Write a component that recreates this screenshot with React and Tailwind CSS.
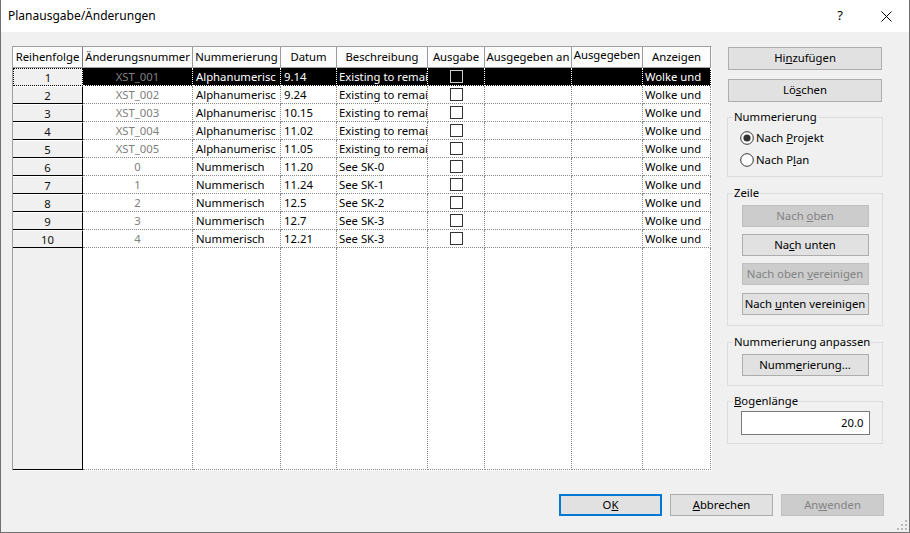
import React from 'react'

const cols = [
  { label: 'Änderungsnummer', w: 'w-[110px]' },
  { label: 'Nummerierung', w: 'w-[88px]' },
  { label: 'Datum', w: 'w-[56px]' },
  { label: 'Beschreibung', w: 'w-[91px]' },
  { label: 'Ausgabe', w: 'w-[57px]' },
  { label: 'Ausgegeben an', w: 'w-[87px]' },
  { label: 'Ausgegeben', w: 'w-[71px]', top: true },
  { label: 'Anzeigen', w: 'w-[68px]' },
]

const rows = [
  ['XST_001', 'Alphanumerisc', '9.14', 'Existing to remai'],
  ['XST_002', 'Alphanumerisc', '9.24', 'Existing to remai'],
  ['XST_003', 'Alphanumerisc', '10.15', 'Existing to remai'],
  ['XST_004', 'Alphanumerisc', '11.02', 'Existing to remai'],
  ['XST_005', 'Alphanumerisc', '11.05', 'Existing to remai'],
  ['0', 'Nummerisch', '11.20', 'See SK-0'],
  ['1', 'Nummerisch', '11.24', 'See SK-1'],
  ['2', 'Nummerisch', '12.5', 'See SK-2'],
  ['3', 'Nummerisch', '12.7', 'See SK-3'],
  ['4', 'Nummerisch', '12.21', 'See SK-3'],
]

function TitleBar() {
  return (
    <div className="h-[32px] shrink-0 bg-white flex items-center">
      <div className="pl-[7px] flex-1 text-[12px]">Planausgabe/Änderungen</div>
      <div className="w-[46px] h-full flex items-center justify-center text-[13px]">?</div>
      <div className="w-[46px] h-full flex items-center justify-center">
        <svg width="11" height="11" viewBox="0 0 11 11">
          <path d="M0.5 0.5 L10.5 10.5 M10.5 0.5 L0.5 10.5" stroke="#000" strokeWidth="1" fill="none" />
        </svg>
      </div>
    </div>
  )
}

function Checkbox({ dark }) {
  return (
    <div
      className={`w-[13px] h-[13px] border ${dark ? 'bg-black border-[#d0d0d0]' : 'bg-white border-[#333333]'}`}
    />
  )
}

function Grid() {
  return (
    <div className="w-[700px] h-[425px] flex flex-col border-l border-t border-[#a0a0a0] border-r-[#fcfcfc] border-b-[#fcfcfc] border-r border-b bg-white">
      {/* header */}
      <div className="flex h-[21px] shrink-0 bg-[#fcfcfc] border-b border-[#a0a0a0]">
        <div className="w-[70px] border-r border-[#7a7a7a] flex items-center justify-center whitespace-nowrap">
          Reihenfolge
        </div>
        {cols.map(c => (
          <div
            key={c.label}
            className={`${c.w} border-r border-[#9a9a9a] flex justify-center whitespace-nowrap overflow-hidden ${c.top ? 'items-start' : 'items-center'}`}
          >
            {c.label}
          </div>
        ))}
      </div>

      {rows.map((r, i) => {
        const sel = i === 0
        const dot = sel ? 'border-white' : 'border-[#8a8a8a]'
        const txt = sel ? 'text-white' : 'text-black'
        return (
          <div key={i} className={`flex h-[18px] shrink-0 leading-[17px] ${sel ? 'bg-black' : 'bg-white'}`}>
            <div
              className={`w-[70px] bg-[#f0f0f0] border-r border-r-black flex items-center justify-center text-[#111] ${sel ? 'border-dotted border border-black' : 'border-t border-t-white border-b border-b-black'}`}
            >
              {i + 1}
            </div>
            <div className={`w-[110px] border-r border-b border-dotted ${dot} text-center text-[#808080]`}>{r[0]}</div>
            <div className={`w-[88px] border-r border-b border-dotted ${dot} ${txt} pl-[3px] whitespace-nowrap overflow-hidden`}>{r[1]}</div>
            <div className={`w-[56px] border-r border-b border-dotted ${dot} ${txt} pl-[3px]`}>{r[2]}</div>
            <div className={`w-[91px] border-r border-b border-dotted ${dot} ${txt} pl-[2px] whitespace-nowrap overflow-hidden`}>{r[3]}</div>
            <div className={`w-[57px] border-r border-b border-dotted ${dot} flex items-center justify-center`}>
              <Checkbox dark={sel} />
            </div>
            <div className={`w-[87px] border-r border-b border-dotted ${dot}`} />
            <div className={`w-[71px] border-r border-b border-dotted ${dot}`} />
            <div className={`w-[68px] border-r border-b border-dotted ${dot} ${txt} pl-[2px] whitespace-nowrap overflow-hidden`}>Wolke und</div>
          </div>
        )
      })}

      {/* empty area */}
      <div className="flex flex-1">
        <div className="w-[70px] bg-[#f0f0f0] border-r border-b border-black" />
        {cols.map(c => (
          <div key={c.label} className={`${c.w} border-r border-b border-dotted border-[#8a8a8a]`} />
        ))}
      </div>
    </div>
  )
}

function Btn({ children, disabled, className = '' }) {
  return (
    <div
      className={`h-[22px] border flex items-center justify-center whitespace-nowrap ${disabled ? 'bg-[#cccccc] border-[#bfbfbf] text-[#838383]' : 'bg-[#e1e1e1] border-[#adadad] text-black'} ${className}`}
    >
      <span>{children}</span>
    </div>
  )
}

function Group({ label, className = '', children }) {
  return (
    <fieldset className={`border border-[#dcdcdc] ${className}`}>
      <legend className="ml-[5px] px-[1px] leading-[16px]">{label}</legend>
      {children}
    </fieldset>
  )
}

function Radio({ checked, children }) {
  return (
    <div className="flex items-center h-[18px] pl-[12px] gap-[2px]">
      <svg width="14" height="14" viewBox="0 0 14 14">
        <circle cx="7" cy="7" r="6.3" fill="#fff" stroke="#333" strokeWidth="1" />
        {checked && <circle cx="7" cy="7" r="3.6" fill="#333" />}
      </svg>
      <span>{children}</span>
    </div>
  )
}

function SidePanel() {
  return (
    <div className="ml-[15px] w-[156px] flex flex-col">
      <Btn className="mt-[1px] ml-[1px] w-[154px] h-[23px]">
        Hi<u>n</u>zufügen
      </Btn>
      <Btn className="mt-[9px] ml-[1px] w-[154px] h-[23px]">
        Lö<u>s</u>chen
      </Btn>

      <Group label="Nummerierung" className="mt-[7px] pt-[4px] pb-[7px] flex flex-col gap-[4px]">
        <Radio checked>
          Nach <u>P</u>rojekt
        </Radio>
        <Radio>
          Nach P<u>l</u>an
        </Radio>
      </Group>

      <Group label="Zeile" className="mt-[8px] pt-[4px] pb-[10px]">
        <div className="flex flex-col gap-[7px] items-center">
          <Btn disabled className="w-[127px]">
            Nach <u>o</u>ben
          </Btn>
          <Btn className="w-[127px]">
            Na<u>c</u>h unten
          </Btn>
          <Btn disabled className="w-[127px]">
            Nach oben <u>v</u>ereinigen
          </Btn>
          <Btn className="w-[127px] mt-[1px]">
            Nach <u>u</u>nten vereinigen
          </Btn>
        </div>
      </Group>

      <Group label="Nummerierung anpassen" className="mt-[8px] pt-[4px] pb-[9px]">
        <div className="flex justify-center">
          <Btn className="w-[127px]">
            Numm<u>e</u>rierung...
          </Btn>
        </div>
      </Group>

      <Group label={<><u>B</u>ogenlänge</>} className="mt-[7px] pt-[2px] pb-[8px]">
        <div className="flex justify-center">
          <div className="w-[129px] h-[24px] bg-white border border-[#7a7a7a] flex items-center justify-end pr-[5px]">
            20.0
          </div>
        </div>
      </Group>
    </div>
  )
}

function Footer() {
  return (
    <div className="flex justify-end gap-[8px] mt-[23px]">
      <div className="w-[103px] h-[22px] border-2 border-[#0078d7] bg-[#e1e1e1] flex items-center justify-center">
        <span>
          O<u>K</u>
        </span>
      </div>
      <Btn className="w-[103px]">
        <u>A</u>bbrechen
      </Btn>
      <Btn disabled className="w-[103px]">
        An<u>w</u>enden
      </Btn>
    </div>
  )
}

function Grip() {
  const dots = [
    [9, 1],
    [5, 5], [9, 5],
    [1, 9], [5, 9], [9, 9],
  ]
  return (
    <svg width="12" height="12" viewBox="0 0 12 12" className="absolute right-[1px] bottom-[1px]">
      {dots.map(([x, y], i) => (
        <rect key={i} x={x} y={y} width="2" height="2" fill="#b8b8b8" />
      ))}
    </svg>
  )
}

export default function App() {
  return (
    <div className="relative w-[910px] h-[533px] flex flex-col border-x border-b border-[#707070] bg-[#f0f0f0] font-['Noto_Sans',sans-serif] text-[11.3px] text-black overflow-hidden">
      <TitleBar />
      <div className="flex-1 flex flex-col pl-[11px] pt-[14px] pr-[25px]">
        <div className="flex">
          <Grid />
          <SidePanel />
        </div>
        <Footer />
      </div>
      <Grip />
    </div>
  )
}
